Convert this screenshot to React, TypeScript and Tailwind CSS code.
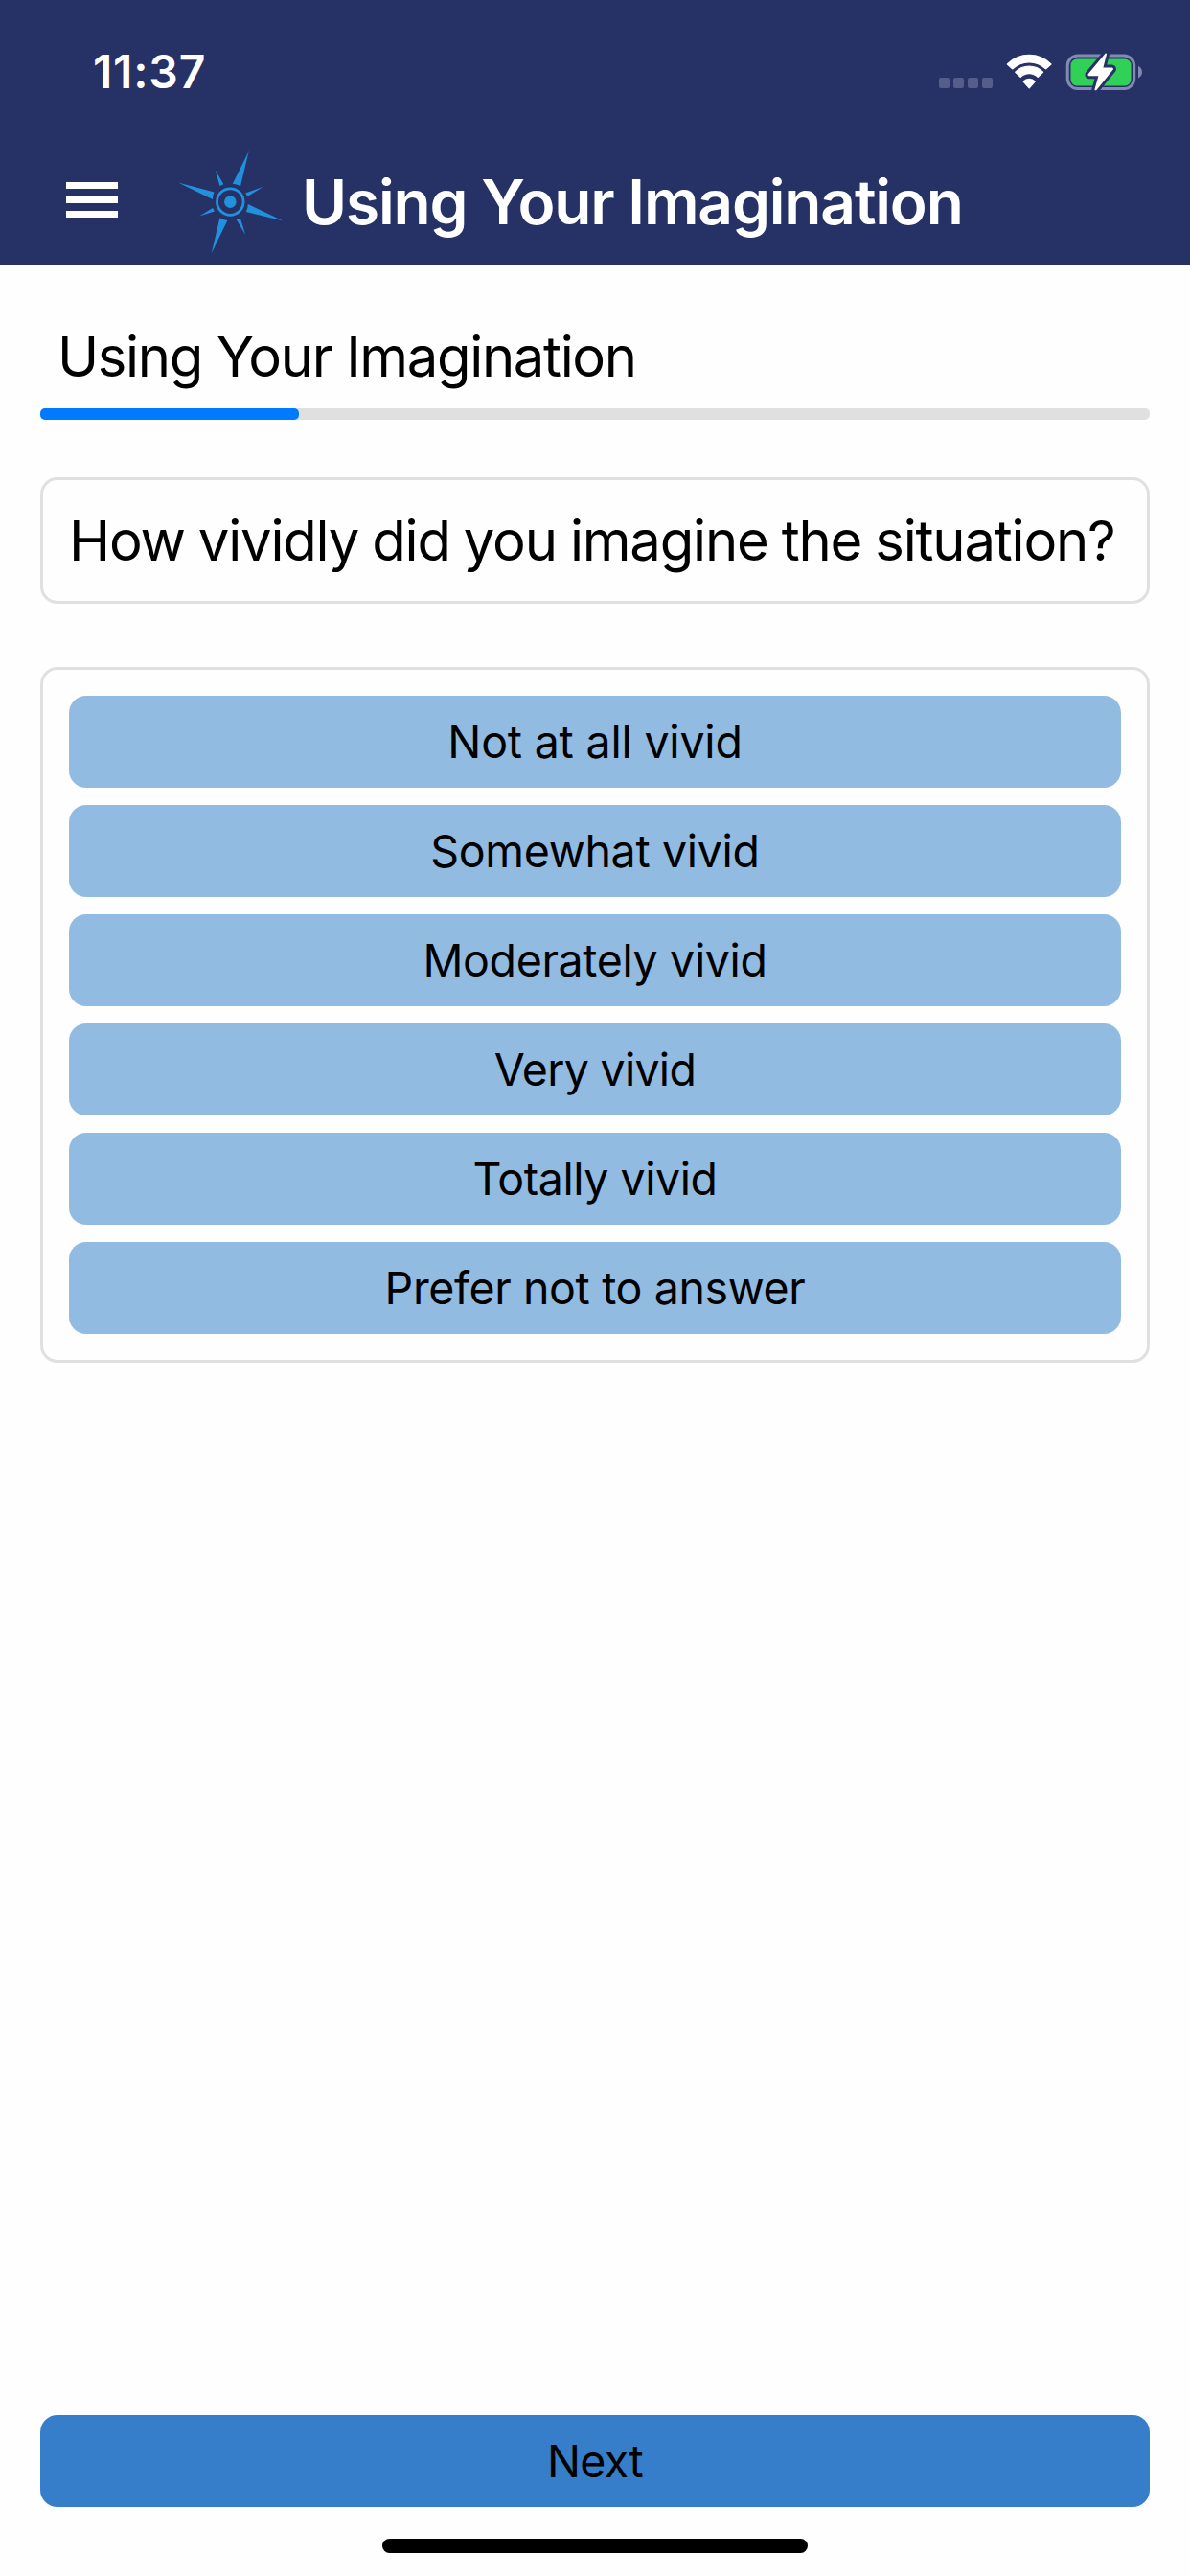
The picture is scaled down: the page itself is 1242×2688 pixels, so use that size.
const options: { label: string; tracking: string }[] = [
  { label: "Not at all vivid", tracking: "tracking-[-0.2px]" },
  { label: "Somewhat vivid", tracking: "tracking-[-0.32px]" },
  { label: "Moderately vivid", tracking: "tracking-[-0.36px]" },
  { label: "Very vivid", tracking: "tracking-[-0.72px]" },
  { label: "Totally vivid", tracking: "tracking-[-0.45px]" },
  { label: "Prefer not to answer", tracking: "tracking-[-0.38px]" },
];

function WifiIcon() {
  return (
    <svg width="48" height="40" viewBox="1049 54 48 40" fill="#fff" stroke="#fff" strokeWidth="1.4" strokeLinejoin="round">
      <path d="M1050.4 65.9A32.2 32.2 0 0 1 1095.9 65.9L1090.6 70.8A25 25 0 0 0 1055.7 70.8Z" />
      <path d="M1058.8 74.2A20 20 0 0 1 1087.5 74.2L1082.2 79.3A12.8 12.8 0 0 0 1064.1 79.3Z" />
      <path d="M1067.2 84.1A8.2 8.2 0 0 1 1079.1 84.1L1073.2 90.8Z" />
    </svg>
  );
}

function BatteryIcon() {
  return (
    <svg width="80" height="40" viewBox="1111 54 80 40">
      <rect x="1113.2" y="57" width="69.5" height="34.6" rx="10.5" fill="none" stroke="#8489b4" strokeWidth="3" />
      <rect x="1116.5" y="60.5" width="63" height="28" rx="6.5" fill="#31d158" />
      <path d="M1187 67.8C1192.3 70.2 1192.3 78 1187 80.4Z" fill="#8489b4" />
      <path
        d="M1152.6 54.8L1134.6 76.2Q1134 78 1135.8 78.2H1145.4L1141.4 92.4Q1142 93.8 1143.4 92.9L1160.8 71.6Q1161.4 70 1159.8 69.6H1150.4L1154 55.6Q1153.8 54.2 1152.6 54.8Z"
        fill="#fff"
        stroke="#263166"
        strokeWidth="6"
        strokeLinejoin="round"
        paintOrder="stroke"
      />
    </svg>
  );
}

function CompassLogo() {
  return (
    <svg width="112" height="110" viewBox="185 156 112 110" fill="#2191dd">
      <path d="M259.7 157.8L251 194.2Q247 192 242.8 191.8Z" />
      <path d="M186 190.6L223.6 200.6Q222 204 221.8 208Z" />
      <path d="M295.5 230.4L256.8 221Q258.8 217 258.8 213Z" />
      <path d="M220.6 264.6L229.4 227.2Q233 229.4 237.4 229.9Z" />
      <path d="M224.8 177.4L233.4 192.2L229.4 194Z" />
      <path d="M275 194.8L258.2 205L256.2 201.6Z" />
      <path d="M208 225.4L222 217L224 220.6Z" />
      <path d="M256.2 245L246.8 229.2L250.8 227.4Z" />
      <circle cx="240.3" cy="210.6" r="13.8" fill="none" stroke="#2191dd" strokeWidth="2.8" />
      <circle cx="240.3" cy="210.6" r="6.3" />
    </svg>
  );
}

export default function App() {
  return (
    <div className="flex h-[2688px] w-[1242px] flex-col bg-[#fefefe] font-['Inter',sans-serif] text-black">
      <header className="flex h-[277px] flex-col border-b border-[#a3a6c0] bg-[#263166] text-white">
        <div className="flex h-[144px] items-center justify-between pt-[5px] pr-[50px] pl-[97px]">
          <span className="text-[48px] font-semibold leading-none tracking-[0.8px]">11:37</span>
          <div className="flex h-10 items-end">
            <div className="flex gap-[4.5px] pb-[3px]">
              {[0, 1, 2, 3].map((i) => (
                <span key={i} className="size-[10.5px] rounded-[2px] bg-[#555d8a]" />
              ))}
            </div>
            <div className="ml-[14px] flex gap-[14.5px]">
              <WifiIcon />
              <BatteryIcon />
            </div>
          </div>
        </div>
        <div className="flex h-[132px] items-center pl-[69px]">
          <button className="flex w-[54px] flex-col gap-2 pb-[3px]" aria-label="Menu">
            <span className="h-[7px] bg-white" />
            <span className="h-[7px] bg-white" />
            <span className="h-[7px] bg-white" />
          </button>
          <div className="ml-[62px] pt-[2px]">
            <CompassLogo />
          </div>
          <h1 className="ml-[18px] whitespace-nowrap pt-[2px] text-[64px] font-semibold leading-[80px] tracking-[-1.18px]">
            Using Your Imagination
          </h1>
        </div>
      </header>

      <main className="flex flex-1 flex-col px-[42px] pt-[59px]">
        <h2 className="pl-[18px] text-[58px] leading-[72px] tracking-[-1.36px]">Using Your Imagination</h2>
        <div className="mt-[18px] h-3 rounded-[5px] bg-[#e0e0e0]">
          <div className="h-3 w-[270px] rounded-[5px] bg-[#007aff]" />
        </div>

        <section className="mt-[60px] flex h-[132px] items-center rounded-[18px] border-[3px] border-[#e0e0e0] pl-[27px]">
          <p className="whitespace-nowrap text-[58px] leading-[72px] tracking-[-1.2px] [word-spacing:-1px]">
            How vividly did you imagine the situation?
          </p>
        </section>

        <section className="mt-[66px] flex flex-col gap-[18px] rounded-[18px] border-[3px] border-[#e0e0e0] p-[27px]">
          {options.map(({ label, tracking }) => (
            <button
              key={label}
              className={`flex h-24 items-center justify-center rounded-[18px] bg-[#92bbe1] text-[46.5px] leading-none ${tracking}`}
            >
              {label}
            </button>
          ))}
        </section>
      </main>

      <footer className="flex flex-col items-center px-[42px] pb-6">
        <button className="flex h-24 w-full items-center justify-center rounded-[18px] bg-[#367dca] text-[46.5px] leading-none tracking-[-0.63px]">
          Next
        </button>
        <div className="mt-[33px] h-[15px] w-[444px] rounded-full bg-black" />
      </footer>
    </div>
  );
}
